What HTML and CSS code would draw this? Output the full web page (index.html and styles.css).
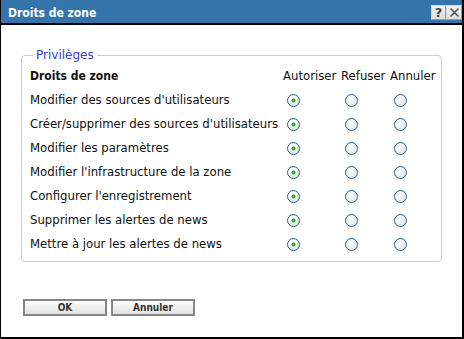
FILE: index.html
```html
<!DOCTYPE html>
<html lang="fr">
<head>
<meta charset="utf-8">
<title>Droits de zone</title>
<link rel="stylesheet" href="styles.css">
</head>
<body>
<div class="window">
  <div class="titlebar">
    <span class="title">Droits de zone</span>
    <div class="tbtns">
      <span class="tbtn help">?</span>
      <span class="tbtn close"><svg width="11" height="11" viewBox="0 0 11 11"><path d="M1.5 1.5L9.5 9.5M9.5 1.5L1.5 9.5" stroke="#555" stroke-width="1.6" fill="none"/></svg></span>
    </div>
  </div>
  <div class="content">
    <fieldset class="priv">
      <legend>Privilèges</legend>
      <table class="rights">
        <colgroup><col class="c-name"><col class="c-a"><col class="c-r"><col class="c-n"></colgroup>
        <thead>
          <tr><th class="name">Droits de zone</th><th>Autoriser</th><th>Refuser</th><th>Annuler</th></tr>
        </thead>
        <tbody>
          <tr><td class="name">Modifier des sources d'utilisateurs</td><td><input type="radio" name="r1" checked></td><td><input type="radio" name="r1"></td><td><input type="radio" name="r1"></td></tr>
          <tr><td class="name">Créer/supprimer des sources d'utilisateurs</td><td><input type="radio" name="r2" checked></td><td><input type="radio" name="r2"></td><td><input type="radio" name="r2"></td></tr>
          <tr><td class="name">Modifier les paramètres</td><td><input type="radio" name="r3" checked></td><td><input type="radio" name="r3"></td><td><input type="radio" name="r3"></td></tr>
          <tr><td class="name">Modifier l'infrastructure de la zone</td><td><input type="radio" name="r4" checked></td><td><input type="radio" name="r4"></td><td><input type="radio" name="r4"></td></tr>
          <tr><td class="name">Configurer l'enregistrement</td><td><input type="radio" name="r5" checked></td><td><input type="radio" name="r5"></td><td><input type="radio" name="r5"></td></tr>
          <tr><td class="name">Supprimer les alertes de news</td><td><input type="radio" name="r6" checked></td><td><input type="radio" name="r6"></td><td><input type="radio" name="r6"></td></tr>
          <tr><td class="name">Mettre à jour les alertes de news</td><td><input type="radio" name="r7" checked></td><td><input type="radio" name="r7"></td><td><input type="radio" name="r7"></td></tr>
        </tbody>
      </table>
    </fieldset>
    <div class="actions">
      <button class="btn">OK</button>
      <button class="btn">Annuler</button>
    </div>
  </div>
</div>
</body>
</html>
```

FILE: styles.css
```css
html, body {
  margin: 0;
  padding: 0;
  background: #fff;
}

.window {
  width: 464px;
  height: 339px;
  box-sizing: border-box;
  border-left: 1px solid #000;
  border-right: 2px solid #000;
  border-bottom: 2px solid #000;
  font-family: "DejaVu Sans", sans-serif;
  background: #fff;
}

.titlebar {
  height: 23px;
  background: #3574ab;
  border-bottom: 2px solid #000;
  display: flex;
  align-items: flex-start;
  justify-content: space-between;
}

.title {
  color: #fff;
  font-family: "DejaVu Sans Condensed", "DejaVu Sans", sans-serif;
  font-stretch: condensed;
  font-weight: bold;
  font-size: 12px;
  line-height: 16px;
  margin: 5px 0 0 7px;
}

.tbtns {
  display: flex;
  margin-top: 5px;
}

.tbtn {
  width: 15px;
  height: 15px;
  box-sizing: border-box;
  border: 1px solid #9a9a9a;
  border-top-color: #d8d8d8;
  border-left-color: #d8d8d8;
  background: linear-gradient(#f4f4f4, #dcdcdc);
  display: flex;
  align-items: center;
  justify-content: center;
}

.tbtn.help {
  font-family: "DejaVu Sans", sans-serif;
  font-weight: bold;
  font-size: 13px;
  color: #444;
  line-height: 13px;
}

.tbtn.close {
  width: 16px;
}

.content {
  padding: 23px 0 0 20px;
}

.priv {
  width: 421px;
  height: 214px;
  box-sizing: border-box;
  margin: 0;
  padding: 1px 8px 5px 8px;
  border: 1px solid #cfcfbf;
  border-radius: 4px;
}

.priv legend {
  margin-left: 3px;
  padding: 0 3px;
  color: #3c3cd8;
  font-size: 12px;
  line-height: 15px;
}

.rights {
  border-collapse: collapse;
  table-layout: fixed;
  width: 403px;
  font-size: 11.7px;
  color: #111;
}

.c-name { width: 253px; }
.c-a { width: 58px; }
.c-r { width: 49px; }
.c-n { width: 43px; }

.rights th,
.rights td {
  height: 24px;
  padding: 0;
  text-align: left;
  white-space: nowrap;
  vertical-align: middle;
}

.rights th {
  font-weight: normal;
}

.rights th.name {
  font-family: "DejaVu Sans Condensed", "DejaVu Sans", sans-serif;
  font-stretch: condensed;
  font-weight: bold;
  font-size: 12px;
}

.rights td {
  padding-left: 4px;
}

.rights td.name {
  padding-left: 0;
}

.rights input[type="radio"] {
  appearance: none;
  -webkit-appearance: none;
  display: block;
  margin: 0;
  width: 13px;
  height: 13px;
  box-sizing: border-box;
  border: 1px solid #335f8c;
  border-radius: 50%;
  background: radial-gradient(circle at 35% 35%, #ffffff 0, #f2f2f2 40%, #d6d6d6 100%);
}

.rights input[type="radio"]:checked {
  background:
    radial-gradient(circle at 50% 50%, #22b422 0, #2cbf2c 1.8px, transparent 2.4px),
    radial-gradient(circle at 35% 35%, #ffffff 0, #f2f2f2 40%, #d6d6d6 100%);
}

.actions {
  display: flex;
  gap: 4px;
  margin: 37px 0 0 2px;
}

.btn {
  width: 84px;
  height: 17px;
  box-sizing: border-box;
  margin: 0;
  padding: 0;
  border: 2px solid #868686;
  background: linear-gradient(#fdfdfd, #e2e2e2);
  font-family: "DejaVu Sans Condensed", "DejaVu Sans", sans-serif;
  font-stretch: condensed;
  font-weight: bold;
  font-size: 10px;
  line-height: 13px;
  color: #333;
}
```
